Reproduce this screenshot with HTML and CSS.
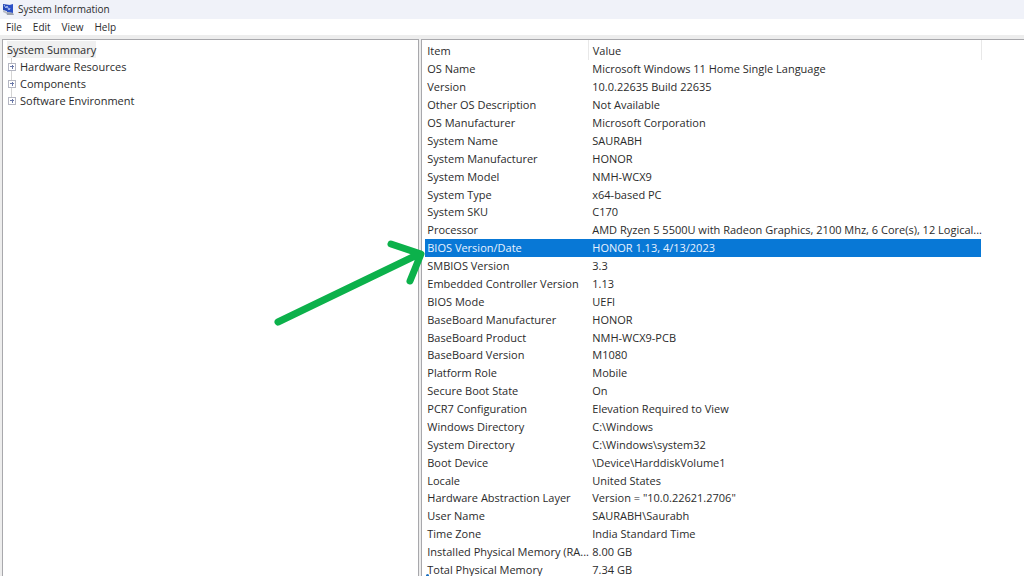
FILE: index.html
```html
<!DOCTYPE html>
<html lang="en">
<head>
<meta charset="utf-8">
<title>System Information</title>
<link rel="stylesheet" href="styles.css">
</head>
<body>
<div class="window">
  <header class="titlebar">
    <svg class="app-icon" viewBox="0 0 12 13" aria-hidden="true">
      <path d="M1 1L8 2V9L1 7Z" fill="#2446b4"/>
      <path d="M4 3L11 1V10L5 9Z" fill="#2c50c6"/>
      <path d="M2 2L4 5L5 3L7 7L8 5" fill="none" stroke="#b4c6f4"/>
      <path d="M4 9L11 10L12 12L5 12Z" fill="#9aa0ae"/>
      <path d="M1 7L5 9V11L1 9Z" fill="#b9bdc8"/>
    </svg>
    <h1 class="title">System Information</h1>
  </header>
  <nav class="menubar">
    <button class="menu">File</button>
    <button class="menu">Edit</button>
    <button class="menu">View</button>
    <button class="menu">Help</button>
  </nav>
  <main class="panes">
    <aside class="tree">
      <button class="root">System Summary</button>
      <ul class="branches">
        <li class="branch"><button class="expander" aria-label="Expand Hardware Resources"></button><span>Hardware Resources</span></li>
        <li class="branch"><button class="expander" aria-label="Expand Components"></button><span>Components</span></li>
        <li class="branch"><button class="expander" aria-label="Expand Software Environment"></button><span>Software Environment</span></li>
      </ul>
    </aside>
    <section class="details">
      <table class="grid">
        <colgroup><col class="col-item"><col class="col-value"><col></colgroup>
        <thead><tr><th>Item</th><th>Value</th><th></th></tr></thead>
        <tbody>
          <tr><td>OS Name</td><td>Microsoft Windows 11 Home Single Language</td></tr>
          <tr><td>Version</td><td>10.0.22635 Build 22635</td></tr>
          <tr><td>Other OS Description</td><td>Not Available</td></tr>
          <tr><td>OS Manufacturer</td><td>Microsoft Corporation</td></tr>
          <tr><td>System Name</td><td>SAURABH</td></tr>
          <tr><td>System Manufacturer</td><td>HONOR</td></tr>
          <tr><td>System Model</td><td>NMH-WCX9</td></tr>
          <tr><td>System Type</td><td>x64-based PC</td></tr>
          <tr><td>System SKU</td><td>C170</td></tr>
          <tr><td>Processor</td><td>AMD Ryzen 5 5500U with Radeon Graphics, 2100 Mhz, 6 Core(s), 12 Logical...</td></tr>
          <tr class="selected"><td>BIOS Version/Date</td><td>HONOR 1.13, 4/13/2023</td></tr>
          <tr><td>SMBIOS Version</td><td>3.3</td></tr>
          <tr><td>Embedded Controller Version</td><td>1.13</td></tr>
          <tr><td>BIOS Mode</td><td>UEFI</td></tr>
          <tr><td>BaseBoard Manufacturer</td><td>HONOR</td></tr>
          <tr><td>BaseBoard Product</td><td>NMH-WCX9-PCB</td></tr>
          <tr><td>BaseBoard Version</td><td>M1080</td></tr>
          <tr><td>Platform Role</td><td>Mobile</td></tr>
          <tr><td>Secure Boot State</td><td>On</td></tr>
          <tr><td>PCR7 Configuration</td><td>Elevation Required to View</td></tr>
          <tr><td>Windows Directory</td><td>C:\Windows</td></tr>
          <tr><td>System Directory</td><td>C:\Windows\system32</td></tr>
          <tr><td>Boot Device</td><td>\Device\HarddiskVolume1</td></tr>
          <tr><td>Locale</td><td>United States</td></tr>
          <tr><td>Hardware Abstraction Layer</td><td>Version = "10.0.22621.2706"</td></tr>
          <tr><td>User Name</td><td>SAURABH\Saurabh</td></tr>
          <tr><td>Time Zone</td><td>India Standard Time</td></tr>
          <tr><td>Installed Physical Memory (RA...</td><td>8.00 GB</td></tr>
          <tr><td>Total Physical Memory</td><td>7.34 GB</td></tr>
        </tbody>
      </table>
    </section>
  </main>
  <svg class="arrow" viewBox="0 0 156 90" aria-hidden="true">
    <path d="M8 83L149 15M121 5L151 15L140 42" fill="none" stroke="#0cb14b" stroke-width="7" stroke-linecap="round" stroke-linejoin="round"/>
  </svg>
  <span class="mark"></span>
</div>
</body>
</html>
```
FILE: styles.css
```css
* { box-sizing: border-box; }
body {
  margin: 0;
  background: #fff;
  color: #2b2b2b;
  font: 11px/18px "Open Sans", "Noto Sans", sans-serif;
}
button {
  border: 0;
  padding: 0;
  background: none;
  color: inherit;
  font: inherit;
}
.window {
  position: relative;
  display: flex;
  flex-direction: column;
  height: 100vh;
  overflow: hidden;
}
.titlebar {
  display: flex;
  align-items: center;
  gap: 4px;
  padding: 0 2px 1px;
  background: #f0f2f9;
}
.app-icon { width: 12px; height: 13px; }
.title { margin: 0; font-size: 10px; font-weight: 400; }
.menubar {
  display: flex;
  gap: 11px;
  padding: 0 6px;
  font-size: 10px;
  line-height: 16px;
}
.panes {
  flex: 1;
  min-height: 0;
  display: grid;
  grid-template-columns: 9fr 13fr;
  gap: 2px;
  padding: 4px 0 0 2px;
  background: #ededed;
}
.tree, .details {
  background: #fff;
  border: 1px solid #a8a8ac;
  border-bottom: 0;
  overflow: hidden;
}
.tree {
  padding: 1px 4px;
  line-height: 17px;
}
.root { display: block; background: #f0f0f0; }
.branches { margin: 0; padding: 0; list-style: none; }
.branch {
  display: flex;
  align-items: center;
  gap: 4px;
  padding-left: 1px;
  background: linear-gradient(#d4d4d4, #d4d4d4) 4px 0 / 1px 100% no-repeat;
}
.branch:last-child { background-size: 1px 50%; }
.expander {
  width: 8px;
  height: 8px;
  border: 1px solid #b4b6c2;
  background:
    linear-gradient(#6a78a8, #6a78a8) center / 4px 1px no-repeat,
    linear-gradient(#6a78a8, #6a78a8) center / 1px 4px no-repeat,
    #fff;
}
.details { border-right: 0; padding-left: 3px; }
.grid {
  width: 100%;
  table-layout: fixed;
  border-collapse: collapse;
}
.col-item { width: 163px; }
.col-value { width: 393px; }
th, td {
  padding: 0 0 0 2px;
  text-align: left;
  font-weight: 400;
  white-space: nowrap;
}
th { height: 20px; padding-top: 2px; border-right: 1px solid #e8e8e8; }
th:last-child { border-right: 0; }
td { line-height: 16px; height: 18px; padding-top: 1px; vertical-align: top; }
td + td, th + th { padding-left: 4px; }
tbody tr:nth-child(8n) td { height: 17px; }
.selected td { background: #0878d6; color: #e8f3ff; }
.arrow {
  position: absolute;
  left: 270px;
  top: 239px;
  width: 156px;
  height: 90px;
  pointer-events: none;
}
.mark {
  position: absolute;
  left: 426px;
  bottom: 0;
  width: 3px;
  height: 2px;
  border-radius: 2px 2px 0 0;
  background: #1a6fc0;
}
```
